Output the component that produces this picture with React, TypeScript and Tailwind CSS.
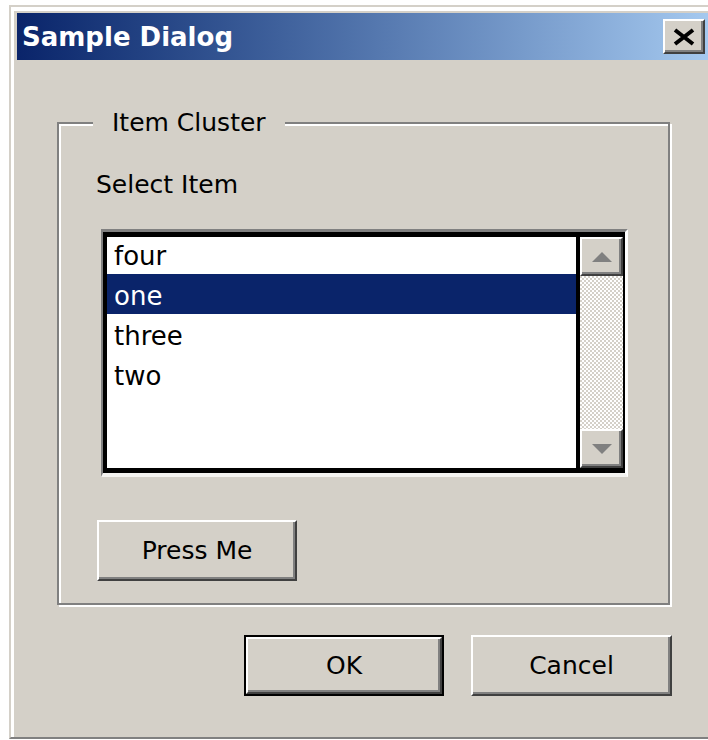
import { ReactNode } from 'react'

const items = ['four', 'one', 'three', 'two']

function RaisedButton({ className, children }: { className: string; children: ReactNode }) {
  return (
    <div
      className={`flex items-center justify-center border-2 border-t-white border-l-white border-r-[#404040] border-b-[#404040] bg-[#d4d0c8] shadow-[inset_-2px_-2px_0_#808080] ${className}`}
    >
      {children}
    </div>
  )
}

function ScrollArrow({ up }: { up?: boolean }) {
  return (
    <RaisedButton className="h-[39px] w-full">
      <svg width="20" height="10" viewBox="0 0 20 10">
        <polygon points={up ? '10,0 20,10 0,10' : '0,0 20,0 10,10'} fill="#808080" />
      </svg>
    </RaisedButton>
  )
}

function App() {
  const selected = 'one'
  return (
    <div className="h-[740px] w-[708px] overflow-hidden bg-white pl-[9px] pt-[5px] font-['DejaVu_Sans',sans-serif] text-[25px] text-black">
      {/* window frame */}
      <div className="h-[734px] w-[712px] border-t-2 border-l-2 border-b-2 border-t-[#d4d0c8] border-l-[#d4d0c8] border-b-[#808080] bg-[#d4d0c8]">
        <div className="h-full border-t-[4px] border-l-[3px] border-white pt-[2px] pl-[3px]">
          {/* title bar */}
          <div className="flex h-[47px] w-[697px] items-center justify-between bg-linear-to-r from-[#0a246a] to-[#a6caf0] pr-[9px] pl-[5px]">
            <span className="text-[26px] leading-none font-bold text-white">Sample Dialog</span>
            <RaisedButton className="h-[35px] w-[42px]">
              <svg width="24" height="18" viewBox="0 0 24 18">
                <path d="M3 2 L21 16 M21 2 L3 16" stroke="#000" strokeWidth="4" />
              </svg>
            </RaisedButton>
          </div>

          <div className="pl-[40px]">
            {/* group box */}
            <div className="relative mt-[62px] flex h-[483px] w-[613px] flex-col items-start border-2 border-[#808080] shadow-[inset_2px_2px_0_#fff,2px_2px_0_#fff]">
              <span className="absolute -top-[16px] left-[34px] bg-[#d4d0c8] px-[19px] leading-[30px]">Item Cluster</span>

              <span className="mt-[46px] ml-[37px] leading-[30px]">Select Item</span>

              {/* list box with scroll bar */}
              <div className="mt-[29px] ml-[42px] h-[248px] w-[527px] border-t-[3px] border-l-[2px] border-r-[3px] border-b-[4px] border-t-[#808080] border-l-[#808080] border-r-white border-b-[#f4f3f0]">
                <div className="flex h-full border-t-[5px] border-l-[4px] border-b-[5px] border-r-[2px] border-black">
                  <div className="flex-1 overflow-hidden bg-white">
                    <div className="-mt-[3px]">
                      {items.map((item) => (
                        <div
                          key={item}
                          className={`flex h-[40px] items-center pt-[3px] pl-[7px] text-[26px] leading-none ${
                            item === selected ? 'bg-[#0a246a] text-white' : ''
                          }`}
                        >
                          {item}
                        </div>
                      ))}
                    </div>
                  </div>
                  <div className="flex w-[47px] flex-col border-l-[4px] border-black">
                    <ScrollArrow up />
                    <div className="flex-1 bg-[image:repeating-conic-gradient(#ffffff_0_25%,#d4d0c8_0_50%)] bg-[length:4px_4px]" />
                    <ScrollArrow />
                  </div>
                </div>
              </div>

              <RaisedButton className="mt-[43px] ml-[38px] h-[61px] w-[200px]">Press Me</RaisedButton>
            </div>

            {/* dialog buttons */}
            <div className="mt-[30px] flex gap-[27px] pl-[187px]">
              <div className="h-[61px] w-[200px] border-2 border-black">
                <RaisedButton className="h-full w-full">OK</RaisedButton>
              </div>
              <RaisedButton className="h-[61px] w-[201px]">Cancel</RaisedButton>
            </div>
          </div>
        </div>
      </div>
    </div>
  )
}

export default App
